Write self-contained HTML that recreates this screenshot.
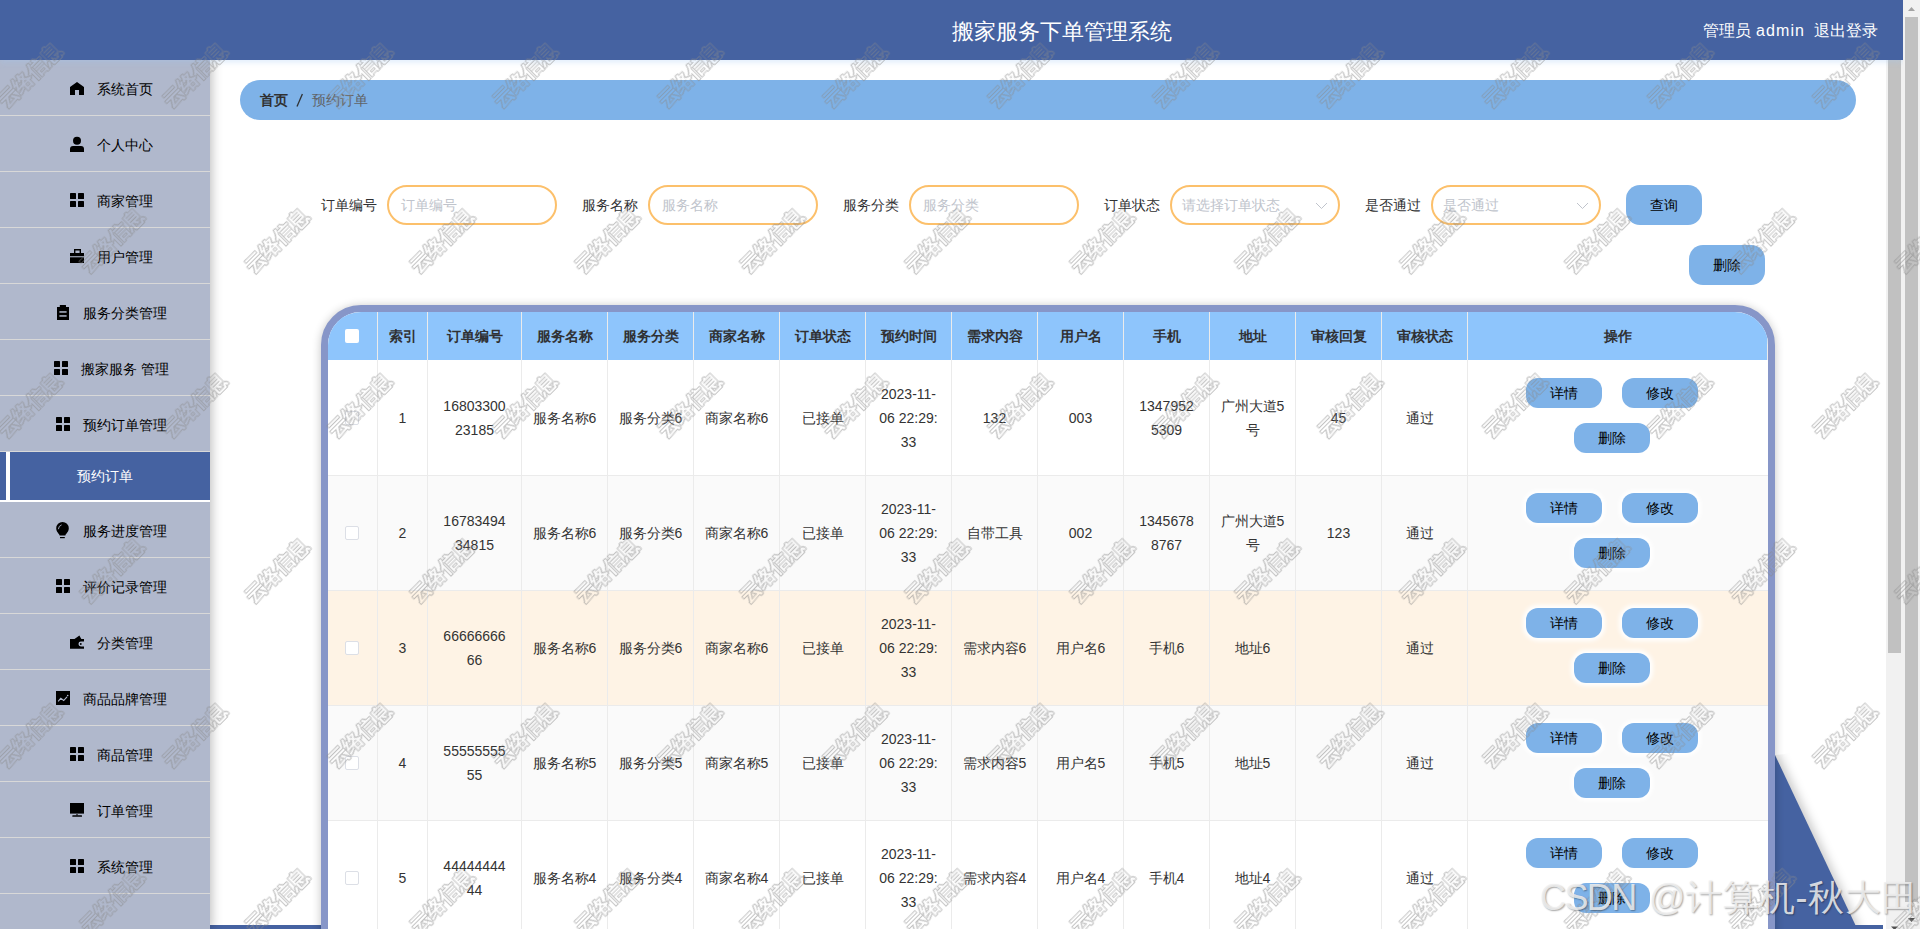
<!DOCTYPE html><html><head><meta charset="utf-8"><style>
*{box-sizing:border-box;margin:0;padding:0}
html,body{width:1920px;height:929px;overflow:hidden;background:#fff;font-family:"Liberation Sans", sans-serif;}
.abs{position:absolute}
#hdr{position:absolute;left:0;top:0;width:1903px;height:60px;background:#4562a1;z-index:5;box-shadow:0 2px 6px rgba(160,200,245,0.35)}
#side{position:absolute;left:0;top:60px;width:210px;height:869px;background:#b0b8cc;z-index:4;box-shadow:2px 0 10px rgba(0,0,0,0.25)}
.mi{position:absolute;left:0;width:210px;height:56px;border-bottom:1px solid #d8d8d8;font-size:14px;color:#000;}
.mi .ic{position:absolute;top:21px;width:14px;height:16px;line-height:0}
.mi .tx{position:absolute;top:1.5px;line-height:55px;white-space:nowrap}
.ph{color:#c0c4cc}
.lbl{position:absolute;top:194px;font-size:14px;color:#303133;line-height:22px;white-space:nowrap}
.inp{position:absolute;top:185px;width:170px;height:40px;border:2px solid #fcc06b;border-radius:20px;font-size:14px;color:#c0c4cc;line-height:36px;padding-left:12px;white-space:nowrap}
.btn{position:absolute;background:#7eb2e8;border-radius:14px;font-size:14px;color:#000;text-align:center}
.cell{position:absolute;font-size:14px;color:#333;text-align:center;line-height:24px}
.hc{position:absolute;font-size:14px;color:#303133;font-weight:bold;text-align:center;line-height:48px;top:312px;height:48px}
.vl{position:absolute;width:1px;background:#ebeef5}
.hl{position:absolute;height:1px;background:#ebeef5}
.cb{position:absolute;width:14px;height:14px;border:1px solid #dcdfe6;border-radius:2px;background:#fff}
.ob{position:absolute;width:76px;height:30px;line-height:30px;background:#7eb2e8;border-radius:12px;font-size:14px;color:#000;text-align:center;box-shadow:0 0 4px 3px #fff}
</style></head><body>

<div class="abs" style="left:210px;top:925px;width:1673px;height:4px;background:#4562a1"></div>
<svg class="abs" style="left:1700px;top:740px;z-index:1" width="200" height="185"><defs><filter id="sh" x="-50%" y="-50%" width="200%" height="200%"><feGaussianBlur stdDeviation="5"/></filter><clipPath id="cp"><polygon points="75,15 200,0 200,185 75,185"/></clipPath></defs><g clip-path="url(#cp)"><polygon points="75,10 159,190 40,190" fill="rgba(0,0,0,0.2)" filter="url(#sh)" transform="translate(2,0)"/></g><polygon points="75,15 155.4,185 75,185" fill="#4562a1"/></svg>
<div id="hdr"><div class="abs" style="left:952px;top:15.5px;font-size:22px;color:#fff;line-height:32px;white-space:nowrap">搬家服务下单管理系统</div><div class="abs" style="left:1703px;top:19px;font-size:16px;color:#fff;line-height:24px;white-space:nowrap">管理员</div><div class="abs" style="left:1756px;top:19px;font-size:16px;color:#fff;line-height:24px;white-space:nowrap;letter-spacing:1.1px">admin</div><div class="abs" style="left:1814px;top:19px;font-size:16px;color:#fff;line-height:24px;white-space:nowrap">退出登录</div></div>
<div id="side">
<div class="mi" style="top:0px"><div class="ic" style="left:70px"><svg width="14" height="16" viewBox="0 0 14 16"><path d="M7 0.9L0 6V14H5V9H9V14H14V6Z" fill="#000"/></svg></div><div class="tx" style="left:97px">系统首页</div></div>
<div class="mi" style="top:56px"><div class="ic" style="left:70px"><svg width="14" height="16" viewBox="0 0 14 16" style="overflow:visible"><circle cx="7" cy="3.8" r="4" fill="#000"/><path d="M0 15V12Q0 9.1 3 9.1H11Q14 9.1 14 12V15Z" fill="#000"/></svg></div><div class="tx" style="left:97px">个人中心</div></div>
<div class="mi" style="top:112px"><div class="ic" style="left:70px"><svg width="14" height="16" viewBox="0 0 14 16"><rect x="0" y="0" width="6" height="6" rx="0.6" fill="#000"/><rect x="8" y="0" width="6" height="6" rx="0.6" fill="#000"/><rect x="0" y="8" width="6" height="6" rx="0.6" fill="#000"/><rect x="8" y="8" width="6" height="6" rx="0.6" fill="#000"/></svg></div><div class="tx" style="left:97px">商家管理</div></div>
<div class="mi" style="top:168px"><div class="ic" style="left:70px"><svg width="14" height="16" viewBox="0 0 14 16"><path d="M4 4V0H11V4H9.6V1.4H5.4V4Z" fill="#000"/><rect x="0" y="4" width="14" height="3.2" fill="#000"/><rect x="0" y="8.3" width="14" height="5.7" fill="#000"/></svg></div><div class="tx" style="left:97px">用户管理</div></div>
<div class="mi" style="top:224px"><div class="ic" style="left:56px"><svg width="14" height="16" viewBox="0 0 14 16"><path d="M1 2H3.8V0.3Q3.8 0 4.2 0H9.6Q10 0 10 0.3V2H13V15H1Z" fill="#000"/><rect x="3.4" y="6.2" width="7.2" height="1.5" fill="#b0b8cc"/><rect x="3.4" y="10.2" width="7.2" height="1.5" fill="#b0b8cc"/></svg></div><div class="tx" style="left:83px">服务分类管理</div></div>
<div class="mi" style="top:280px"><div class="ic" style="left:54px"><svg width="14" height="16" viewBox="0 0 14 16"><rect x="0" y="0" width="6" height="6" rx="0.6" fill="#000"/><rect x="8" y="0" width="6" height="6" rx="0.6" fill="#000"/><rect x="0" y="8" width="6" height="6" rx="0.6" fill="#000"/><rect x="8" y="8" width="6" height="6" rx="0.6" fill="#000"/></svg></div><div class="tx" style="left:81px">搬家服务 管理</div></div>
<div class="mi" style="top:336px"><div class="ic" style="left:56px"><svg width="14" height="16" viewBox="0 0 14 16"><rect x="0" y="0" width="6" height="6" rx="0.6" fill="#000"/><rect x="8" y="0" width="6" height="6" rx="0.6" fill="#000"/><rect x="0" y="8" width="6" height="6" rx="0.6" fill="#000"/><rect x="8" y="8" width="6" height="6" rx="0.6" fill="#000"/></svg></div><div class="tx" style="left:83px">预约订单管理</div></div>
<div class="abs" style="left:0;top:392px;width:210px;height:50px;background:#4562a1;border-bottom:2px solid #fff"><div class="abs" style="left:6px;top:0;width:4px;height:48px;background:#fff"></div><div class="abs" style="left:0;width:210px;text-align:center;line-height:48px;font-size:14px;color:#fff">预约订单</div></div>
<div class="mi" style="top:442px"><div class="ic" style="left:56px"><svg width="14" height="16" viewBox="0 0 14 16" style="overflow:visible"><path d="M3.6 12.6C3.2 10.6 0.2 9.2 0.2 5.3A6.3 6.3 0 0 1 12.8 5.3C12.8 9.2 9.8 10.6 9.4 12.6Z" fill="#000"/><path d="M2.4 6.2Q2.6 2.8 5.6 1.9" stroke="#b0b8cc" stroke-width="0.9" fill="none"/><rect x="4" y="14" width="4.8" height="1.2" fill="#000"/></svg></div><div class="tx" style="left:83px">服务进度管理</div></div>
<div class="mi" style="top:498px"><div class="ic" style="left:56px"><svg width="14" height="16" viewBox="0 0 14 16"><rect x="0" y="0" width="6" height="6" rx="0.6" fill="#000"/><rect x="8" y="0" width="6" height="6" rx="0.6" fill="#000"/><rect x="0" y="8" width="6" height="6" rx="0.6" fill="#000"/><rect x="8" y="8" width="6" height="6" rx="0.6" fill="#000"/></svg></div><div class="tx" style="left:83px">评价记录管理</div></div>
<div class="mi" style="top:554px"><div class="ic" style="left:70px"><svg width="14" height="16" viewBox="0 0 14 16"><path d="M4.5 4L9.4 0.6L11.3 4Z" fill="#000"/><path d="M0 4H14V6.5H10.9A2.45 2.45 0 0 0 10.9 11.4H14V13.8H0Z" fill="#000"/><circle cx="10.8" cy="9" r="0.9" fill="#000"/></svg></div><div class="tx" style="left:97px">分类管理</div></div>
<div class="mi" style="top:610px"><div class="ic" style="left:56px"><svg width="14" height="16" viewBox="0 0 14 16"><rect x="0" y="0" width="14" height="14" fill="#000"/><path d="M2.2 10.4L4.8 7.2L7.7 9.5L11 5.8" stroke="#b0b8cc" stroke-width="1.1" fill="none"/><circle cx="11.7" cy="4.6" r="0.8" fill="#b0b8cc"/></svg></div><div class="tx" style="left:83px">商品品牌管理</div></div>
<div class="mi" style="top:666px"><div class="ic" style="left:70px"><svg width="14" height="16" viewBox="0 0 14 16"><rect x="0" y="0" width="6" height="6" rx="0.6" fill="#000"/><rect x="8" y="0" width="6" height="6" rx="0.6" fill="#000"/><rect x="0" y="8" width="6" height="6" rx="0.6" fill="#000"/><rect x="8" y="8" width="6" height="6" rx="0.6" fill="#000"/></svg></div><div class="tx" style="left:97px">商品管理</div></div>
<div class="mi" style="top:722px"><div class="ic" style="left:70px"><svg width="14" height="16" viewBox="0 0 14 16"><rect x="0" y="0" width="14" height="10.6" fill="#000"/><rect x="6.3" y="11.2" width="1.4" height="1.2" fill="#000"/><rect x="2.3" y="12.2" width="9.7" height="1.6" rx="0.5" fill="#000"/></svg></div><div class="tx" style="left:97px">订单管理</div></div>
<div class="mi" style="top:778px"><div class="ic" style="left:70px"><svg width="14" height="16" viewBox="0 0 14 16"><rect x="0" y="0" width="6" height="6" rx="0.6" fill="#000"/><rect x="8" y="0" width="6" height="6" rx="0.6" fill="#000"/><rect x="0" y="8" width="6" height="6" rx="0.6" fill="#000"/><rect x="8" y="8" width="6" height="6" rx="0.6" fill="#000"/></svg></div><div class="tx" style="left:97px">系统管理</div></div>
</div>
<div class="abs" style="left:1886px;top:60px;width:17px;height:869px;background:#f1f1f1;z-index:3"><div class="abs" style="left:2px;top:0;width:13px;height:593px;background:#c1c1c1"></div><svg class="abs" style="left:0;top:866px" width="17" height="3"><path d="M5 0.5H12L8.5 4Z" fill="#505050"/></svg></div>
<div class="abs" style="left:1903px;top:0;width:17px;height:929px;background:#f1f1f1;z-index:6"><svg class="abs" style="left:0;top:0" width="17" height="17"><path d="M5 11L8.5 7L12 11Z" fill="#a3a3a3"/></svg><div class="abs" style="left:2px;top:17px;width:13px;height:885px;background:#c1c1c1"></div><svg class="abs" style="left:0;top:912px" width="17" height="17"><path d="M5 6L8.5 10L12 6Z" fill="#505050"/></svg></div>
<div class="abs" style="left:240px;top:80px;width:1616px;height:40px;background:#7eb2e8;border-radius:20px;font-size:14px;line-height:40px;white-space:nowrap"><span class="abs" style="left:20px;font-weight:bold;color:#303133">首页</span><svg class="abs" style="left:55px;top:13px" width="10" height="15"><path d="M7.4 1L2 13.6" stroke="#303133" stroke-width="1.3" fill="none"/></svg><span class="abs" style="left:72px;color:#606266">预约订单</span></div>
<div class="lbl" style="left:321px">订单编号</div>
<div class="inp" style="left:387px;">订单编号
</div>
<div class="lbl" style="left:582px">服务名称</div>
<div class="inp" style="left:648px;">服务名称
</div>
<div class="lbl" style="left:843px">服务分类</div>
<div class="inp" style="left:909px;">服务分类
</div>
<div class="lbl" style="left:1104px">订单状态</div>
<div class="inp" style="left:1170px;padding-left:10px">请选择订单状态
<svg class="abs" style="left:143px;top:14px" width="13" height="10"><path d="M1 2L6.5 7.5L12 2" stroke="#c0c4cc" stroke-width="1" fill="none"/></svg>
</div>
<div class="lbl" style="left:1365px">是否通过</div>
<div class="inp" style="left:1431px;padding-left:10px">是否通过
<svg class="abs" style="left:143px;top:14px" width="13" height="10"><path d="M1 2L6.5 7.5L12 2" stroke="#c0c4cc" stroke-width="1" fill="none"/></svg>
</div>
<div class="btn" style="left:1626px;top:185px;width:76px;height:40px;line-height:40px">查询</div>
<div class="btn" style="left:1689px;top:245px;width:76px;height:40px;line-height:40px">删除</div>
<div class="abs" style="left:321px;top:305px;width:1454px;height:700px;border:7px solid #8796c8;border-radius:40px;background:#fff;box-shadow:0 1px 10px rgba(0,0,0,0.24);overflow:hidden;z-index:2">
<div class="abs" style="left:0;top:0;width:1440px;height:700px"><div class="abs" style="left:0;top:0;width:1440px;height:48px;background:#8ec5fc"></div><div class="abs" style="left:49px;top:0;width:1px;height:48px;background:#ebebeb"></div><div class="hc" style="left:14.5px;top:0;width:120px">索引</div><div class="abs" style="left:99px;top:0;width:1px;height:48px;background:#ebebeb"></div><div class="hc" style="left:86.5px;top:0;width:120px">订单编号</div><div class="abs" style="left:193px;top:0;width:1px;height:48px;background:#ebebeb"></div><div class="hc" style="left:176.5px;top:0;width:120px">服务名称</div><div class="abs" style="left:279px;top:0;width:1px;height:48px;background:#ebebeb"></div><div class="hc" style="left:262.5px;top:0;width:120px">服务分类</div><div class="abs" style="left:365px;top:0;width:1px;height:48px;background:#ebebeb"></div><div class="hc" style="left:348.5px;top:0;width:120px">商家名称</div><div class="abs" style="left:451px;top:0;width:1px;height:48px;background:#ebebeb"></div><div class="hc" style="left:434.5px;top:0;width:120px">订单状态</div><div class="abs" style="left:537px;top:0;width:1px;height:48px;background:#ebebeb"></div><div class="hc" style="left:520.5px;top:0;width:120px">预约时间</div><div class="abs" style="left:623px;top:0;width:1px;height:48px;background:#ebebeb"></div><div class="hc" style="left:606.5px;top:0;width:120px">需求内容</div><div class="abs" style="left:709px;top:0;width:1px;height:48px;background:#ebebeb"></div><div class="hc" style="left:692.5px;top:0;width:120px">用户名</div><div class="abs" style="left:795px;top:0;width:1px;height:48px;background:#ebebeb"></div><div class="hc" style="left:778.5px;top:0;width:120px">手机</div><div class="abs" style="left:881px;top:0;width:1px;height:48px;background:#ebebeb"></div><div class="hc" style="left:864.5px;top:0;width:120px">地址</div><div class="abs" style="left:967px;top:0;width:1px;height:48px;background:#ebebeb"></div><div class="hc" style="left:950.5px;top:0;width:120px">审核回复</div><div class="abs" style="left:1053px;top:0;width:1px;height:48px;background:#ebebeb"></div><div class="hc" style="left:1036.5px;top:0;width:120px">审核状态</div><div class="abs" style="left:1139px;top:0;width:1px;height:48px;background:#ebebeb"></div><div class="hc" style="left:1229.5px;top:0;width:120px">操作</div><div class="abs" style="left:17px;top:17px;width:14px;height:14px;background:#fff;border-radius:2px"></div><div class="abs" style="left:1439px;top:0;width:1px;height:48px;background:#ebebeb"></div><div class="abs" style="left:0;top:48px;width:1440px;height:116px;background:#fff;border-bottom:1px solid #ebebeb"></div><div class="abs" style="left:49px;top:48px;width:1px;height:116px;background:#ebebeb"></div><div class="abs" style="left:99px;top:48px;width:1px;height:116px;background:#ebebeb"></div><div class="abs" style="left:193px;top:48px;width:1px;height:116px;background:#ebebeb"></div><div class="abs" style="left:279px;top:48px;width:1px;height:116px;background:#ebebeb"></div><div class="abs" style="left:365px;top:48px;width:1px;height:116px;background:#ebebeb"></div><div class="abs" style="left:451px;top:48px;width:1px;height:116px;background:#ebebeb"></div><div class="abs" style="left:537px;top:48px;width:1px;height:116px;background:#ebebeb"></div><div class="abs" style="left:623px;top:48px;width:1px;height:116px;background:#ebebeb"></div><div class="abs" style="left:709px;top:48px;width:1px;height:116px;background:#ebebeb"></div><div class="abs" style="left:795px;top:48px;width:1px;height:116px;background:#ebebeb"></div><div class="abs" style="left:881px;top:48px;width:1px;height:116px;background:#ebebeb"></div><div class="abs" style="left:967px;top:48px;width:1px;height:116px;background:#ebebeb"></div><div class="abs" style="left:1053px;top:48px;width:1px;height:116px;background:#ebebeb"></div><div class="abs" style="left:1139px;top:48px;width:1px;height:116px;background:#ebebeb"></div><div class="cb" style="left:17px;top:98.5px"></div><div class="cell" style="left:24.5px;top:93.5px;width:100px">1</div><div class="cell" style="left:96.5px;top:81.5px;width:100px">16803300<br>23185</div><div class="cell" style="left:186.5px;top:93.5px;width:100px">服务名称6</div><div class="cell" style="left:272.5px;top:93.5px;width:100px">服务分类6</div><div class="cell" style="left:358.5px;top:93.5px;width:100px">商家名称6</div><div class="cell" style="left:444.5px;top:93.5px;width:100px">已接单</div><div class="cell" style="left:530.5px;top:69.5px;width:100px">2023-11-<br>06 22:29:<br>33</div><div class="cell" style="left:616.5px;top:93.5px;width:100px">132</div><div class="cell" style="left:702.5px;top:93.5px;width:100px">003</div><div class="cell" style="left:788.5px;top:81.5px;width:100px">1347952<br>5309</div><div class="cell" style="left:874.5px;top:81.5px;width:100px">广州大道5<br>号</div><div class="cell" style="left:960.5px;top:93.5px;width:100px">45</div><div class="cell" style="left:1041.5px;top:93.5px;width:100px">通过</div><div class="ob" style="left:1198px;top:66px">详情</div><div class="ob" style="left:1294px;top:66px">修改</div><div class="ob" style="left:1246px;top:111px">删除</div><div class="abs" style="left:0;top:164px;width:1440px;height:115px;background:#fafafa;border-bottom:1px solid #ebebeb"></div><div class="abs" style="left:49px;top:164px;width:1px;height:115px;background:#ebebeb"></div><div class="abs" style="left:99px;top:164px;width:1px;height:115px;background:#ebebeb"></div><div class="abs" style="left:193px;top:164px;width:1px;height:115px;background:#ebebeb"></div><div class="abs" style="left:279px;top:164px;width:1px;height:115px;background:#ebebeb"></div><div class="abs" style="left:365px;top:164px;width:1px;height:115px;background:#ebebeb"></div><div class="abs" style="left:451px;top:164px;width:1px;height:115px;background:#ebebeb"></div><div class="abs" style="left:537px;top:164px;width:1px;height:115px;background:#ebebeb"></div><div class="abs" style="left:623px;top:164px;width:1px;height:115px;background:#ebebeb"></div><div class="abs" style="left:709px;top:164px;width:1px;height:115px;background:#ebebeb"></div><div class="abs" style="left:795px;top:164px;width:1px;height:115px;background:#ebebeb"></div><div class="abs" style="left:881px;top:164px;width:1px;height:115px;background:#ebebeb"></div><div class="abs" style="left:967px;top:164px;width:1px;height:115px;background:#ebebeb"></div><div class="abs" style="left:1053px;top:164px;width:1px;height:115px;background:#ebebeb"></div><div class="abs" style="left:1139px;top:164px;width:1px;height:115px;background:#ebebeb"></div><div class="cb" style="left:17px;top:214.0px"></div><div class="cell" style="left:24.5px;top:209.0px;width:100px">2</div><div class="cell" style="left:96.5px;top:197.0px;width:100px">16783494<br>34815</div><div class="cell" style="left:186.5px;top:209.0px;width:100px">服务名称6</div><div class="cell" style="left:272.5px;top:209.0px;width:100px">服务分类6</div><div class="cell" style="left:358.5px;top:209.0px;width:100px">商家名称6</div><div class="cell" style="left:444.5px;top:209.0px;width:100px">已接单</div><div class="cell" style="left:530.5px;top:185.0px;width:100px">2023-11-<br>06 22:29:<br>33</div><div class="cell" style="left:616.5px;top:209.0px;width:100px">自带工具</div><div class="cell" style="left:702.5px;top:209.0px;width:100px">002</div><div class="cell" style="left:788.5px;top:197.0px;width:100px">1345678<br>8767</div><div class="cell" style="left:874.5px;top:197.0px;width:100px">广州大道5<br>号</div><div class="cell" style="left:960.5px;top:209.0px;width:100px">123</div><div class="cell" style="left:1041.5px;top:209.0px;width:100px">通过</div><div class="ob" style="left:1198px;top:181px">详情</div><div class="ob" style="left:1294px;top:181px">修改</div><div class="ob" style="left:1246px;top:226px">删除</div><div class="abs" style="left:0;top:279px;width:1440px;height:115px;background:#fef3e5;border-bottom:1px solid #ebebeb"></div><div class="abs" style="left:49px;top:279px;width:1px;height:115px;background:#ebebeb"></div><div class="abs" style="left:99px;top:279px;width:1px;height:115px;background:#ebebeb"></div><div class="abs" style="left:193px;top:279px;width:1px;height:115px;background:#ebebeb"></div><div class="abs" style="left:279px;top:279px;width:1px;height:115px;background:#ebebeb"></div><div class="abs" style="left:365px;top:279px;width:1px;height:115px;background:#ebebeb"></div><div class="abs" style="left:451px;top:279px;width:1px;height:115px;background:#ebebeb"></div><div class="abs" style="left:537px;top:279px;width:1px;height:115px;background:#ebebeb"></div><div class="abs" style="left:623px;top:279px;width:1px;height:115px;background:#ebebeb"></div><div class="abs" style="left:709px;top:279px;width:1px;height:115px;background:#ebebeb"></div><div class="abs" style="left:795px;top:279px;width:1px;height:115px;background:#ebebeb"></div><div class="abs" style="left:881px;top:279px;width:1px;height:115px;background:#ebebeb"></div><div class="abs" style="left:967px;top:279px;width:1px;height:115px;background:#ebebeb"></div><div class="abs" style="left:1053px;top:279px;width:1px;height:115px;background:#ebebeb"></div><div class="abs" style="left:1139px;top:279px;width:1px;height:115px;background:#ebebeb"></div><div class="cb" style="left:17px;top:329.0px"></div><div class="cell" style="left:24.5px;top:324.0px;width:100px">3</div><div class="cell" style="left:96.5px;top:312.0px;width:100px">66666666<br>66</div><div class="cell" style="left:186.5px;top:324.0px;width:100px">服务名称6</div><div class="cell" style="left:272.5px;top:324.0px;width:100px">服务分类6</div><div class="cell" style="left:358.5px;top:324.0px;width:100px">商家名称6</div><div class="cell" style="left:444.5px;top:324.0px;width:100px">已接单</div><div class="cell" style="left:530.5px;top:300.0px;width:100px">2023-11-<br>06 22:29:<br>33</div><div class="cell" style="left:616.5px;top:324.0px;width:100px">需求内容6</div><div class="cell" style="left:702.5px;top:324.0px;width:100px">用户名6</div><div class="cell" style="left:788.5px;top:324.0px;width:100px">手机6</div><div class="cell" style="left:874.5px;top:324.0px;width:100px">地址6</div><div class="cell" style="left:1041.5px;top:324.0px;width:100px">通过</div><div class="ob" style="left:1198px;top:296px">详情</div><div class="ob" style="left:1294px;top:296px">修改</div><div class="ob" style="left:1246px;top:341px">删除</div><div class="abs" style="left:0;top:394px;width:1440px;height:115px;background:#fafafa;border-bottom:1px solid #ebebeb"></div><div class="abs" style="left:49px;top:394px;width:1px;height:115px;background:#ebebeb"></div><div class="abs" style="left:99px;top:394px;width:1px;height:115px;background:#ebebeb"></div><div class="abs" style="left:193px;top:394px;width:1px;height:115px;background:#ebebeb"></div><div class="abs" style="left:279px;top:394px;width:1px;height:115px;background:#ebebeb"></div><div class="abs" style="left:365px;top:394px;width:1px;height:115px;background:#ebebeb"></div><div class="abs" style="left:451px;top:394px;width:1px;height:115px;background:#ebebeb"></div><div class="abs" style="left:537px;top:394px;width:1px;height:115px;background:#ebebeb"></div><div class="abs" style="left:623px;top:394px;width:1px;height:115px;background:#ebebeb"></div><div class="abs" style="left:709px;top:394px;width:1px;height:115px;background:#ebebeb"></div><div class="abs" style="left:795px;top:394px;width:1px;height:115px;background:#ebebeb"></div><div class="abs" style="left:881px;top:394px;width:1px;height:115px;background:#ebebeb"></div><div class="abs" style="left:967px;top:394px;width:1px;height:115px;background:#ebebeb"></div><div class="abs" style="left:1053px;top:394px;width:1px;height:115px;background:#ebebeb"></div><div class="abs" style="left:1139px;top:394px;width:1px;height:115px;background:#ebebeb"></div><div class="cb" style="left:17px;top:444.0px"></div><div class="cell" style="left:24.5px;top:439.0px;width:100px">4</div><div class="cell" style="left:96.5px;top:427.0px;width:100px">55555555<br>55</div><div class="cell" style="left:186.5px;top:439.0px;width:100px">服务名称5</div><div class="cell" style="left:272.5px;top:439.0px;width:100px">服务分类5</div><div class="cell" style="left:358.5px;top:439.0px;width:100px">商家名称5</div><div class="cell" style="left:444.5px;top:439.0px;width:100px">已接单</div><div class="cell" style="left:530.5px;top:415.0px;width:100px">2023-11-<br>06 22:29:<br>33</div><div class="cell" style="left:616.5px;top:439.0px;width:100px">需求内容5</div><div class="cell" style="left:702.5px;top:439.0px;width:100px">用户名5</div><div class="cell" style="left:788.5px;top:439.0px;width:100px">手机5</div><div class="cell" style="left:874.5px;top:439.0px;width:100px">地址5</div><div class="cell" style="left:1041.5px;top:439.0px;width:100px">通过</div><div class="ob" style="left:1198px;top:411px">详情</div><div class="ob" style="left:1294px;top:411px">修改</div><div class="ob" style="left:1246px;top:456px">删除</div><div class="abs" style="left:0;top:509px;width:1440px;height:115px;background:#fff;border-bottom:1px solid #ebebeb"></div><div class="abs" style="left:49px;top:509px;width:1px;height:115px;background:#ebebeb"></div><div class="abs" style="left:99px;top:509px;width:1px;height:115px;background:#ebebeb"></div><div class="abs" style="left:193px;top:509px;width:1px;height:115px;background:#ebebeb"></div><div class="abs" style="left:279px;top:509px;width:1px;height:115px;background:#ebebeb"></div><div class="abs" style="left:365px;top:509px;width:1px;height:115px;background:#ebebeb"></div><div class="abs" style="left:451px;top:509px;width:1px;height:115px;background:#ebebeb"></div><div class="abs" style="left:537px;top:509px;width:1px;height:115px;background:#ebebeb"></div><div class="abs" style="left:623px;top:509px;width:1px;height:115px;background:#ebebeb"></div><div class="abs" style="left:709px;top:509px;width:1px;height:115px;background:#ebebeb"></div><div class="abs" style="left:795px;top:509px;width:1px;height:115px;background:#ebebeb"></div><div class="abs" style="left:881px;top:509px;width:1px;height:115px;background:#ebebeb"></div><div class="abs" style="left:967px;top:509px;width:1px;height:115px;background:#ebebeb"></div><div class="abs" style="left:1053px;top:509px;width:1px;height:115px;background:#ebebeb"></div><div class="abs" style="left:1139px;top:509px;width:1px;height:115px;background:#ebebeb"></div><div class="cb" style="left:17px;top:559.0px"></div><div class="cell" style="left:24.5px;top:554.0px;width:100px">5</div><div class="cell" style="left:96.5px;top:542.0px;width:100px">44444444<br>44</div><div class="cell" style="left:186.5px;top:554.0px;width:100px">服务名称4</div><div class="cell" style="left:272.5px;top:554.0px;width:100px">服务分类4</div><div class="cell" style="left:358.5px;top:554.0px;width:100px">商家名称4</div><div class="cell" style="left:444.5px;top:554.0px;width:100px">已接单</div><div class="cell" style="left:530.5px;top:530.0px;width:100px">2023-11-<br>06 22:29:<br>33</div><div class="cell" style="left:616.5px;top:554.0px;width:100px">需求内容4</div><div class="cell" style="left:702.5px;top:554.0px;width:100px">用户名4</div><div class="cell" style="left:788.5px;top:554.0px;width:100px">手机4</div><div class="cell" style="left:874.5px;top:554.0px;width:100px">地址4</div><div class="cell" style="left:1041.5px;top:554.0px;width:100px">通过</div><div class="ob" style="left:1198px;top:526px">详情</div><div class="ob" style="left:1294px;top:526px">修改</div><div class="ob" style="left:1246px;top:571px">删除</div></div>
</div>
<svg class="abs" style="left:0;top:0;z-index:50;pointer-events:none" width="1920" height="929"><defs><filter id="ol" x="-20%" y="-20%" width="140%" height="140%"><feMorphology in="SourceAlpha" operator="dilate" radius="0.9" result="d1"/><feComposite in="d1" in2="SourceAlpha" operator="out" result="ring"/><feFlood flood-color="#8a8a8a" flood-opacity="0.5"/><feComposite in2="ring" operator="in"/></filter></defs><g font-family="Liberation Sans, sans-serif" font-size="20" font-weight="bold" fill="#000" text-anchor="middle" dominant-baseline="central"><g transform="rotate(-45 -52.5 -89.5)"><text x="-52.5" y="-89.5" filter="url(#ol)">云络信息</text></g><g transform="rotate(-45 112.5 -89.5)"><text x="112.5" y="-89.5" filter="url(#ol)">云络信息</text></g><g transform="rotate(-45 277.5 -89.5)"><text x="277.5" y="-89.5" filter="url(#ol)">云络信息</text></g><g transform="rotate(-45 442.5 -89.5)"><text x="442.5" y="-89.5" filter="url(#ol)">云络信息</text></g><g transform="rotate(-45 607.5 -89.5)"><text x="607.5" y="-89.5" filter="url(#ol)">云络信息</text></g><g transform="rotate(-45 772.5 -89.5)"><text x="772.5" y="-89.5" filter="url(#ol)">云络信息</text></g><g transform="rotate(-45 937.5 -89.5)"><text x="937.5" y="-89.5" filter="url(#ol)">云络信息</text></g><g transform="rotate(-45 1102.5 -89.5)"><text x="1102.5" y="-89.5" filter="url(#ol)">云络信息</text></g><g transform="rotate(-45 1267.5 -89.5)"><text x="1267.5" y="-89.5" filter="url(#ol)">云络信息</text></g><g transform="rotate(-45 1432.5 -89.5)"><text x="1432.5" y="-89.5" filter="url(#ol)">云络信息</text></g><g transform="rotate(-45 1597.5 -89.5)"><text x="1597.5" y="-89.5" filter="url(#ol)">云络信息</text></g><g transform="rotate(-45 1762.5 -89.5)"><text x="1762.5" y="-89.5" filter="url(#ol)">云络信息</text></g><g transform="rotate(-45 1927.5 -89.5)"><text x="1927.5" y="-89.5" filter="url(#ol)">云络信息</text></g><g transform="rotate(-45 2092.5 -89.5)"><text x="2092.5" y="-89.5" filter="url(#ol)">云络信息</text></g><g transform="rotate(-45 -135.0 75.5)"><text x="-135.0" y="75.5" filter="url(#ol)">云络信息</text></g><g transform="rotate(-45 30.0 75.5)"><text x="30.0" y="75.5" filter="url(#ol)">云络信息</text></g><g transform="rotate(-45 195.0 75.5)"><text x="195.0" y="75.5" filter="url(#ol)">云络信息</text></g><g transform="rotate(-45 360.0 75.5)"><text x="360.0" y="75.5" filter="url(#ol)">云络信息</text></g><g transform="rotate(-45 525.0 75.5)"><text x="525.0" y="75.5" filter="url(#ol)">云络信息</text></g><g transform="rotate(-45 690.0 75.5)"><text x="690.0" y="75.5" filter="url(#ol)">云络信息</text></g><g transform="rotate(-45 855.0 75.5)"><text x="855.0" y="75.5" filter="url(#ol)">云络信息</text></g><g transform="rotate(-45 1020.0 75.5)"><text x="1020.0" y="75.5" filter="url(#ol)">云络信息</text></g><g transform="rotate(-45 1185.0 75.5)"><text x="1185.0" y="75.5" filter="url(#ol)">云络信息</text></g><g transform="rotate(-45 1350.0 75.5)"><text x="1350.0" y="75.5" filter="url(#ol)">云络信息</text></g><g transform="rotate(-45 1515.0 75.5)"><text x="1515.0" y="75.5" filter="url(#ol)">云络信息</text></g><g transform="rotate(-45 1680.0 75.5)"><text x="1680.0" y="75.5" filter="url(#ol)">云络信息</text></g><g transform="rotate(-45 1845.0 75.5)"><text x="1845.0" y="75.5" filter="url(#ol)">云络信息</text></g><g transform="rotate(-45 2010.0 75.5)"><text x="2010.0" y="75.5" filter="url(#ol)">云络信息</text></g><g transform="rotate(-45 -52.5 240.5)"><text x="-52.5" y="240.5" filter="url(#ol)">云络信息</text></g><g transform="rotate(-45 112.5 240.5)"><text x="112.5" y="240.5" filter="url(#ol)">云络信息</text></g><g transform="rotate(-45 277.5 240.5)"><text x="277.5" y="240.5" filter="url(#ol)">云络信息</text></g><g transform="rotate(-45 442.5 240.5)"><text x="442.5" y="240.5" filter="url(#ol)">云络信息</text></g><g transform="rotate(-45 607.5 240.5)"><text x="607.5" y="240.5" filter="url(#ol)">云络信息</text></g><g transform="rotate(-45 772.5 240.5)"><text x="772.5" y="240.5" filter="url(#ol)">云络信息</text></g><g transform="rotate(-45 937.5 240.5)"><text x="937.5" y="240.5" filter="url(#ol)">云络信息</text></g><g transform="rotate(-45 1102.5 240.5)"><text x="1102.5" y="240.5" filter="url(#ol)">云络信息</text></g><g transform="rotate(-45 1267.5 240.5)"><text x="1267.5" y="240.5" filter="url(#ol)">云络信息</text></g><g transform="rotate(-45 1432.5 240.5)"><text x="1432.5" y="240.5" filter="url(#ol)">云络信息</text></g><g transform="rotate(-45 1597.5 240.5)"><text x="1597.5" y="240.5" filter="url(#ol)">云络信息</text></g><g transform="rotate(-45 1762.5 240.5)"><text x="1762.5" y="240.5" filter="url(#ol)">云络信息</text></g><g transform="rotate(-45 1927.5 240.5)"><text x="1927.5" y="240.5" filter="url(#ol)">云络信息</text></g><g transform="rotate(-45 2092.5 240.5)"><text x="2092.5" y="240.5" filter="url(#ol)">云络信息</text></g><g transform="rotate(-45 -135.0 405.5)"><text x="-135.0" y="405.5" filter="url(#ol)">云络信息</text></g><g transform="rotate(-45 30.0 405.5)"><text x="30.0" y="405.5" filter="url(#ol)">云络信息</text></g><g transform="rotate(-45 195.0 405.5)"><text x="195.0" y="405.5" filter="url(#ol)">云络信息</text></g><g transform="rotate(-45 360.0 405.5)"><text x="360.0" y="405.5" filter="url(#ol)">云络信息</text></g><g transform="rotate(-45 525.0 405.5)"><text x="525.0" y="405.5" filter="url(#ol)">云络信息</text></g><g transform="rotate(-45 690.0 405.5)"><text x="690.0" y="405.5" filter="url(#ol)">云络信息</text></g><g transform="rotate(-45 855.0 405.5)"><text x="855.0" y="405.5" filter="url(#ol)">云络信息</text></g><g transform="rotate(-45 1020.0 405.5)"><text x="1020.0" y="405.5" filter="url(#ol)">云络信息</text></g><g transform="rotate(-45 1185.0 405.5)"><text x="1185.0" y="405.5" filter="url(#ol)">云络信息</text></g><g transform="rotate(-45 1350.0 405.5)"><text x="1350.0" y="405.5" filter="url(#ol)">云络信息</text></g><g transform="rotate(-45 1515.0 405.5)"><text x="1515.0" y="405.5" filter="url(#ol)">云络信息</text></g><g transform="rotate(-45 1680.0 405.5)"><text x="1680.0" y="405.5" filter="url(#ol)">云络信息</text></g><g transform="rotate(-45 1845.0 405.5)"><text x="1845.0" y="405.5" filter="url(#ol)">云络信息</text></g><g transform="rotate(-45 2010.0 405.5)"><text x="2010.0" y="405.5" filter="url(#ol)">云络信息</text></g><g transform="rotate(-45 -52.5 570.5)"><text x="-52.5" y="570.5" filter="url(#ol)">云络信息</text></g><g transform="rotate(-45 112.5 570.5)"><text x="112.5" y="570.5" filter="url(#ol)">云络信息</text></g><g transform="rotate(-45 277.5 570.5)"><text x="277.5" y="570.5" filter="url(#ol)">云络信息</text></g><g transform="rotate(-45 442.5 570.5)"><text x="442.5" y="570.5" filter="url(#ol)">云络信息</text></g><g transform="rotate(-45 607.5 570.5)"><text x="607.5" y="570.5" filter="url(#ol)">云络信息</text></g><g transform="rotate(-45 772.5 570.5)"><text x="772.5" y="570.5" filter="url(#ol)">云络信息</text></g><g transform="rotate(-45 937.5 570.5)"><text x="937.5" y="570.5" filter="url(#ol)">云络信息</text></g><g transform="rotate(-45 1102.5 570.5)"><text x="1102.5" y="570.5" filter="url(#ol)">云络信息</text></g><g transform="rotate(-45 1267.5 570.5)"><text x="1267.5" y="570.5" filter="url(#ol)">云络信息</text></g><g transform="rotate(-45 1432.5 570.5)"><text x="1432.5" y="570.5" filter="url(#ol)">云络信息</text></g><g transform="rotate(-45 1597.5 570.5)"><text x="1597.5" y="570.5" filter="url(#ol)">云络信息</text></g><g transform="rotate(-45 1762.5 570.5)"><text x="1762.5" y="570.5" filter="url(#ol)">云络信息</text></g><g transform="rotate(-45 1927.5 570.5)"><text x="1927.5" y="570.5" filter="url(#ol)">云络信息</text></g><g transform="rotate(-45 2092.5 570.5)"><text x="2092.5" y="570.5" filter="url(#ol)">云络信息</text></g><g transform="rotate(-45 -135.0 735.5)"><text x="-135.0" y="735.5" filter="url(#ol)">云络信息</text></g><g transform="rotate(-45 30.0 735.5)"><text x="30.0" y="735.5" filter="url(#ol)">云络信息</text></g><g transform="rotate(-45 195.0 735.5)"><text x="195.0" y="735.5" filter="url(#ol)">云络信息</text></g><g transform="rotate(-45 360.0 735.5)"><text x="360.0" y="735.5" filter="url(#ol)">云络信息</text></g><g transform="rotate(-45 525.0 735.5)"><text x="525.0" y="735.5" filter="url(#ol)">云络信息</text></g><g transform="rotate(-45 690.0 735.5)"><text x="690.0" y="735.5" filter="url(#ol)">云络信息</text></g><g transform="rotate(-45 855.0 735.5)"><text x="855.0" y="735.5" filter="url(#ol)">云络信息</text></g><g transform="rotate(-45 1020.0 735.5)"><text x="1020.0" y="735.5" filter="url(#ol)">云络信息</text></g><g transform="rotate(-45 1185.0 735.5)"><text x="1185.0" y="735.5" filter="url(#ol)">云络信息</text></g><g transform="rotate(-45 1350.0 735.5)"><text x="1350.0" y="735.5" filter="url(#ol)">云络信息</text></g><g transform="rotate(-45 1515.0 735.5)"><text x="1515.0" y="735.5" filter="url(#ol)">云络信息</text></g><g transform="rotate(-45 1680.0 735.5)"><text x="1680.0" y="735.5" filter="url(#ol)">云络信息</text></g><g transform="rotate(-45 1845.0 735.5)"><text x="1845.0" y="735.5" filter="url(#ol)">云络信息</text></g><g transform="rotate(-45 2010.0 735.5)"><text x="2010.0" y="735.5" filter="url(#ol)">云络信息</text></g><g transform="rotate(-45 -52.5 900.5)"><text x="-52.5" y="900.5" filter="url(#ol)">云络信息</text></g><g transform="rotate(-45 112.5 900.5)"><text x="112.5" y="900.5" filter="url(#ol)">云络信息</text></g><g transform="rotate(-45 277.5 900.5)"><text x="277.5" y="900.5" filter="url(#ol)">云络信息</text></g><g transform="rotate(-45 442.5 900.5)"><text x="442.5" y="900.5" filter="url(#ol)">云络信息</text></g><g transform="rotate(-45 607.5 900.5)"><text x="607.5" y="900.5" filter="url(#ol)">云络信息</text></g><g transform="rotate(-45 772.5 900.5)"><text x="772.5" y="900.5" filter="url(#ol)">云络信息</text></g><g transform="rotate(-45 937.5 900.5)"><text x="937.5" y="900.5" filter="url(#ol)">云络信息</text></g><g transform="rotate(-45 1102.5 900.5)"><text x="1102.5" y="900.5" filter="url(#ol)">云络信息</text></g><g transform="rotate(-45 1267.5 900.5)"><text x="1267.5" y="900.5" filter="url(#ol)">云络信息</text></g><g transform="rotate(-45 1432.5 900.5)"><text x="1432.5" y="900.5" filter="url(#ol)">云络信息</text></g><g transform="rotate(-45 1597.5 900.5)"><text x="1597.5" y="900.5" filter="url(#ol)">云络信息</text></g><g transform="rotate(-45 1762.5 900.5)"><text x="1762.5" y="900.5" filter="url(#ol)">云络信息</text></g><g transform="rotate(-45 1927.5 900.5)"><text x="1927.5" y="900.5" filter="url(#ol)">云络信息</text></g><g transform="rotate(-45 2092.5 900.5)"><text x="2092.5" y="900.5" filter="url(#ol)">云络信息</text></g><g transform="rotate(-45 -135.0 1065.5)"><text x="-135.0" y="1065.5" filter="url(#ol)">云络信息</text></g><g transform="rotate(-45 30.0 1065.5)"><text x="30.0" y="1065.5" filter="url(#ol)">云络信息</text></g><g transform="rotate(-45 195.0 1065.5)"><text x="195.0" y="1065.5" filter="url(#ol)">云络信息</text></g><g transform="rotate(-45 360.0 1065.5)"><text x="360.0" y="1065.5" filter="url(#ol)">云络信息</text></g><g transform="rotate(-45 525.0 1065.5)"><text x="525.0" y="1065.5" filter="url(#ol)">云络信息</text></g><g transform="rotate(-45 690.0 1065.5)"><text x="690.0" y="1065.5" filter="url(#ol)">云络信息</text></g><g transform="rotate(-45 855.0 1065.5)"><text x="855.0" y="1065.5" filter="url(#ol)">云络信息</text></g><g transform="rotate(-45 1020.0 1065.5)"><text x="1020.0" y="1065.5" filter="url(#ol)">云络信息</text></g><g transform="rotate(-45 1185.0 1065.5)"><text x="1185.0" y="1065.5" filter="url(#ol)">云络信息</text></g><g transform="rotate(-45 1350.0 1065.5)"><text x="1350.0" y="1065.5" filter="url(#ol)">云络信息</text></g><g transform="rotate(-45 1515.0 1065.5)"><text x="1515.0" y="1065.5" filter="url(#ol)">云络信息</text></g><g transform="rotate(-45 1680.0 1065.5)"><text x="1680.0" y="1065.5" filter="url(#ol)">云络信息</text></g><g transform="rotate(-45 1845.0 1065.5)"><text x="1845.0" y="1065.5" filter="url(#ol)">云络信息</text></g><g transform="rotate(-45 2010.0 1065.5)"><text x="2010.0" y="1065.5" filter="url(#ol)">云络信息</text></g></g></svg>
<div class="abs" style="left:1540px;top:876px;z-index:60;font-size:36px;line-height:44px;color:rgba(240,240,240,0.85);text-shadow:1px 1px 1.5px rgba(0,0,0,0.35);white-space:nowrap;letter-spacing:-1.6px">CSDN</div>
<div class="abs" style="left:1649px;top:876px;z-index:60;font-size:36px;line-height:44px;color:rgba(240,240,240,0.85);text-shadow:1px 1px 1.5px rgba(0,0,0,0.35);white-space:nowrap;letter-spacing:0.5px">@计算机-秋大田</div>
</body></html>
